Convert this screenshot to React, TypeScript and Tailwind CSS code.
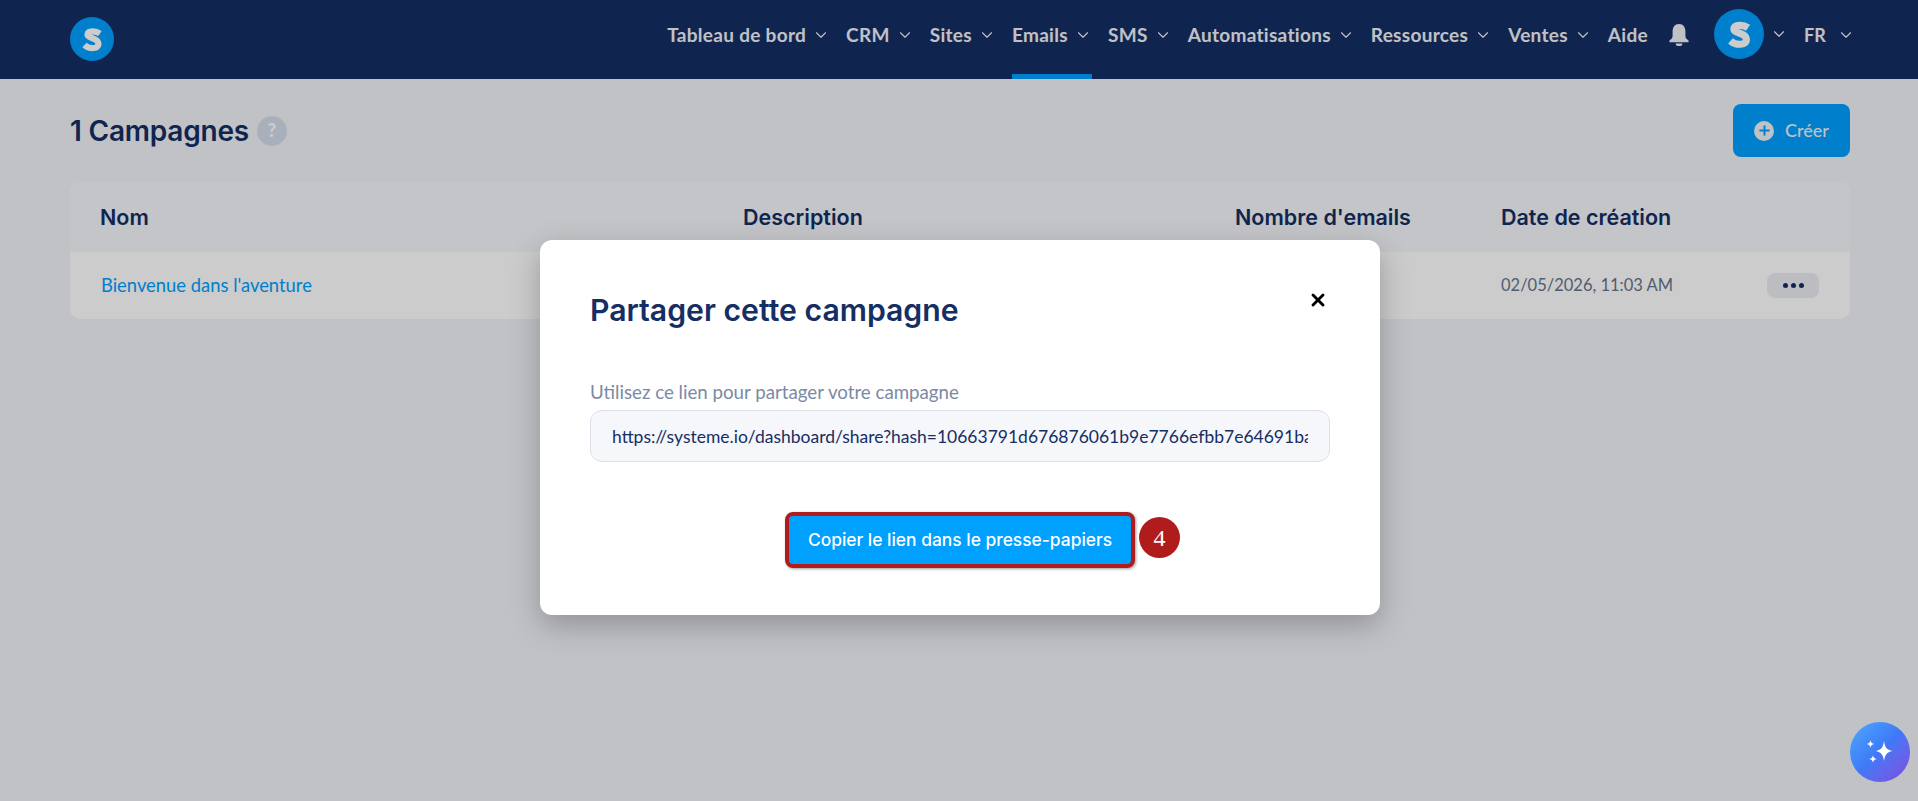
// App.tsx
import React from "react";
import { ChevronDown, Plus, X } from "lucide-react";

const body = "font-['Lato','Noto_Sans',sans-serif]";
const inter = "font-['Inter','Liberation_Sans',sans-serif]";

const navItems = [
  { label: "Tableau de bord", chevron: true },
  { label: "CRM", chevron: true },
  { label: "Sites", chevron: true },
  { label: "Emails", chevron: true, active: true },
  { label: "SMS", chevron: true },
  { label: "Automatisations", chevron: true },
  { label: "Ressources", chevron: true },
  { label: "Ventes", chevron: true },
  { label: "Aide", chevron: false },
];

const Chevron = () => (
  <ChevronDown className="ml-[6px] h-[18px] w-[18px] text-[#f1f2f7]" strokeWidth={1.5} />
);

const LogoS = ({ size }: { size: number }) => (
  <svg width={size} height={size} viewBox="0 0 44 44" className="shrink-0">
    <circle cx="22" cy="22" r="22" fill="#00a0ff" />
    <path
      d="M30 16.500 C26 13.800 18 13.300 17.500 17.500 C17 21.500 28.500 20.500 28.500 27 C28.500 32.200 19 32.200 14.500 28"
      fill="none"
      stroke="#ffffff"
      strokeWidth="6.200"
    />
  </svg>
);

const Bell = () => (
  <svg width="20" height="22" viewBox="0 0 20 22" fill="#f1f2f7" className="shrink-0">
    <path d="M10 0C5.600 0 3.600 3.400 3.600 7.600V12C3.600 14 2.400 15 .8 16.200.1 16.800 0 18.200 1.200 18.200H18.800C20 18.200 19.900 16.800 19.200 16.200 17.600 15 16.400 14 16.400 12V7.600C16.400 3.400 14.400 0 10 0Z" />
    <path d="M6.600 19.400H13.400C13.400 21 12.400 22 10 22 7.600 22 6.600 21 6.600 19.400Z" />
  </svg>
);

const Sparkles = () => (
  <svg width="36" height="36" viewBox="0 0 36 36" fill="#ffffff">
    <path d="M22 7C23 13.500 24.500 15.500 30.500 17 24.500 18.500 23 20.500 22 27 21 20.500 19.500 18.500 13.500 17 19.500 15.500 21 13.500 22 7Z" />
    <path d="M8.500 6C9 8.800 9.700 9.500 12.500 10 9.700 10.500 9 11.200 8.500 14 8 11.200 7.300 10.500 4.500 10 7.300 9.500 8 8.800 8.500 6Z" />
    <path d="M11 21C11.500 23.800 12.200 24.500 15 25 12.200 25.500 11.500 26.200 11 29 10.500 26.200 9.800 25.500 7 25 9.800 24.500 10.500 23.800 11 21Z" />
  </svg>
);

export default function App() {
  return (
    <div className={`relative h-screen overflow-hidden bg-[#f1f3f8] ${body}`}>
      <header className="flex h-[79px] items-center justify-between bg-[#152e64] pl-[70px] pr-[63px]">
        <div className="pb-[1px]">
          <LogoS size={44} />
        </div>
        <nav className="flex h-full items-center">
          <ul className="flex h-full items-center gap-[16px]">
            {navItems.map((item) => (
              <li key={item.label} className="relative flex h-full items-center pb-[9px]">
                <span className="text-[19px] font-bold tracking-[0.3px] text-[#f1f2f7]">
                  {item.label}
                </span>
                {item.chevron && <Chevron />}
                {item.active && (
                  <span className="absolute bottom-0 left-0 right-0 h-[5px] bg-[#00a0ff]" />
                )}
              </li>
            ))}
          </ul>
          <div className="ml-[21px] flex items-center pb-[9px]">
            <Bell />
          </div>
          <div className="ml-[25px] flex items-center pb-[11px]">
            <LogoS size={50} />
            <Chevron />
          </div>
          <div className="ml-[16px] flex items-center pb-[9px]">
            <span className="w-[21px] text-[18px] font-bold text-[#f1f2f7]">FR</span>
            <ChevronDown className="ml-[12px] h-[18px] w-[18px] text-[#f1f2f7]" strokeWidth={1.5} />
          </div>
        </nav>
      </header>

      <main className="px-[68px] pl-[70px] pt-[25px]">
        <div className="flex h-[53px] items-center justify-between">
          <div className="flex items-center gap-[8px]">
            <h1 className={`text-[28px] font-semibold tracking-[-0.2px] text-[#152e64] ${inter}`}>
              1 Campagnes
            </h1>
            <span className="flex h-[30px] w-[30px] items-center justify-center rounded-full bg-[#d3ddec] text-[18px] font-black text-white">
              ?
            </span>
          </div>
          <button className="flex h-[53px] w-[117px] items-center justify-center gap-[11px] rounded-[8px] bg-[#00a0ff] text-[18px] font-medium text-[#f1f2f7]">
            <span className="flex h-[20px] w-[20px] items-center justify-center rounded-full bg-[#f1f2f7]">
              <Plus className="h-[15px] w-[15px] text-[#00a0ff]" strokeWidth={3} />
            </span>
            Créer
          </button>
        </div>

        <div className="mt-[25px] overflow-hidden rounded-[10px] bg-white">
          <div className={`grid h-[70px] grid-cols-[643px_492px_266px_1fr] items-center bg-[#f6f7fa] pl-[30px] text-[21.500px] font-semibold text-[#152e64] ${inter}`}>
            <span>Nom</span>
            <span>Description</span>
            <span>Nombre d'emails</span>
            <span>Date de création</span>
          </div>
          <div className="grid h-[67px] grid-cols-[643px_492px_266px_1fr] items-center pl-[30px] text-[18.400px]">
            <a className="pl-px text-[#00a0ff]">Bienvenue dans l'aventure</a>
            <span />
            <span />
            <div className="flex items-center justify-between pr-[31px]">
              <span className="text-[16.500px] text-[#64748b]">02/05/2026, 11:03 AM</span>
              <button className="flex h-[25px] w-[52px] items-center justify-center gap-[3px] rounded-[8px] bg-[#ebedf2]">
                <span className="h-[5px] w-[5px] rounded-full bg-[#152e64]" />
                <span className="h-[5px] w-[5px] rounded-full bg-[#152e64]" />
                <span className="h-[5px] w-[5px] rounded-full bg-[#152e64]" />
              </button>
            </div>
          </div>
        </div>
      </main>

      <div className="absolute inset-0 flex items-start justify-center bg-black/20 pt-[240px]">
        <div className="ml-[2px] h-[375px] w-[840px] rounded-[12px] bg-white px-[50px] shadow-[0_10px_30px_rgba(0,0,0,0.25)]">
          <div className="flex items-start justify-between pt-[50px]">
            <h2 className={`text-[30.200px] leading-[40px] font-semibold text-[#152e64] ${inter}`}>
              Partager cette campagne
            </h2>
            <X className="mr-[2px] h-[20px] w-[20px] text-black" strokeWidth={3.500} />
          </div>
          <label className="mt-[49px] block text-[18.700px] leading-[26px] text-[#7a8aa5]">
            Utilisez ce lien pour partager votre campagne
          </label>
          <input
            readOnly
            value="https://systeme.io/dashboard/share?hash=10663791d676876061b9e7766efbb7e64691ba2c"
            className="mt-[5px] block h-[52px] w-full rounded-[12px] border border-[#dce0e8] bg-[#f5f7fa] px-[21px] text-[17.500px] text-[#152e64] outline-none"
          />
          <div className="mt-[50px] flex justify-center">
            <div className="relative">
              <button className={`h-[56px] w-[350px] rounded-[8px] border-[4px] border-[#b01c1c] bg-[#00a0ff] text-[17.400px] font-medium text-white shadow-[1px_1px_3px_rgba(0,0,0,0.4)] ${inter}`}>
                Copier le lien dans le presse-papiers
              </button>
              <span className="absolute left-full top-[5px] ml-[4px] flex h-[41px] w-[41px] items-center justify-center rounded-full bg-[#b01c1c] font-['Liberation_Serif',serif] text-[24px] text-white">
                4
              </span>
            </div>
          </div>
        </div>
      </div>

      <button className="absolute bottom-[19px] right-[8px] flex h-[60px] w-[60px] items-center justify-center rounded-full bg-gradient-to-br from-[#4fa8fb] via-[#3f78f8] to-[#7d48db]">
        <Sparkles />
      </button>
    </div>
  );
}
